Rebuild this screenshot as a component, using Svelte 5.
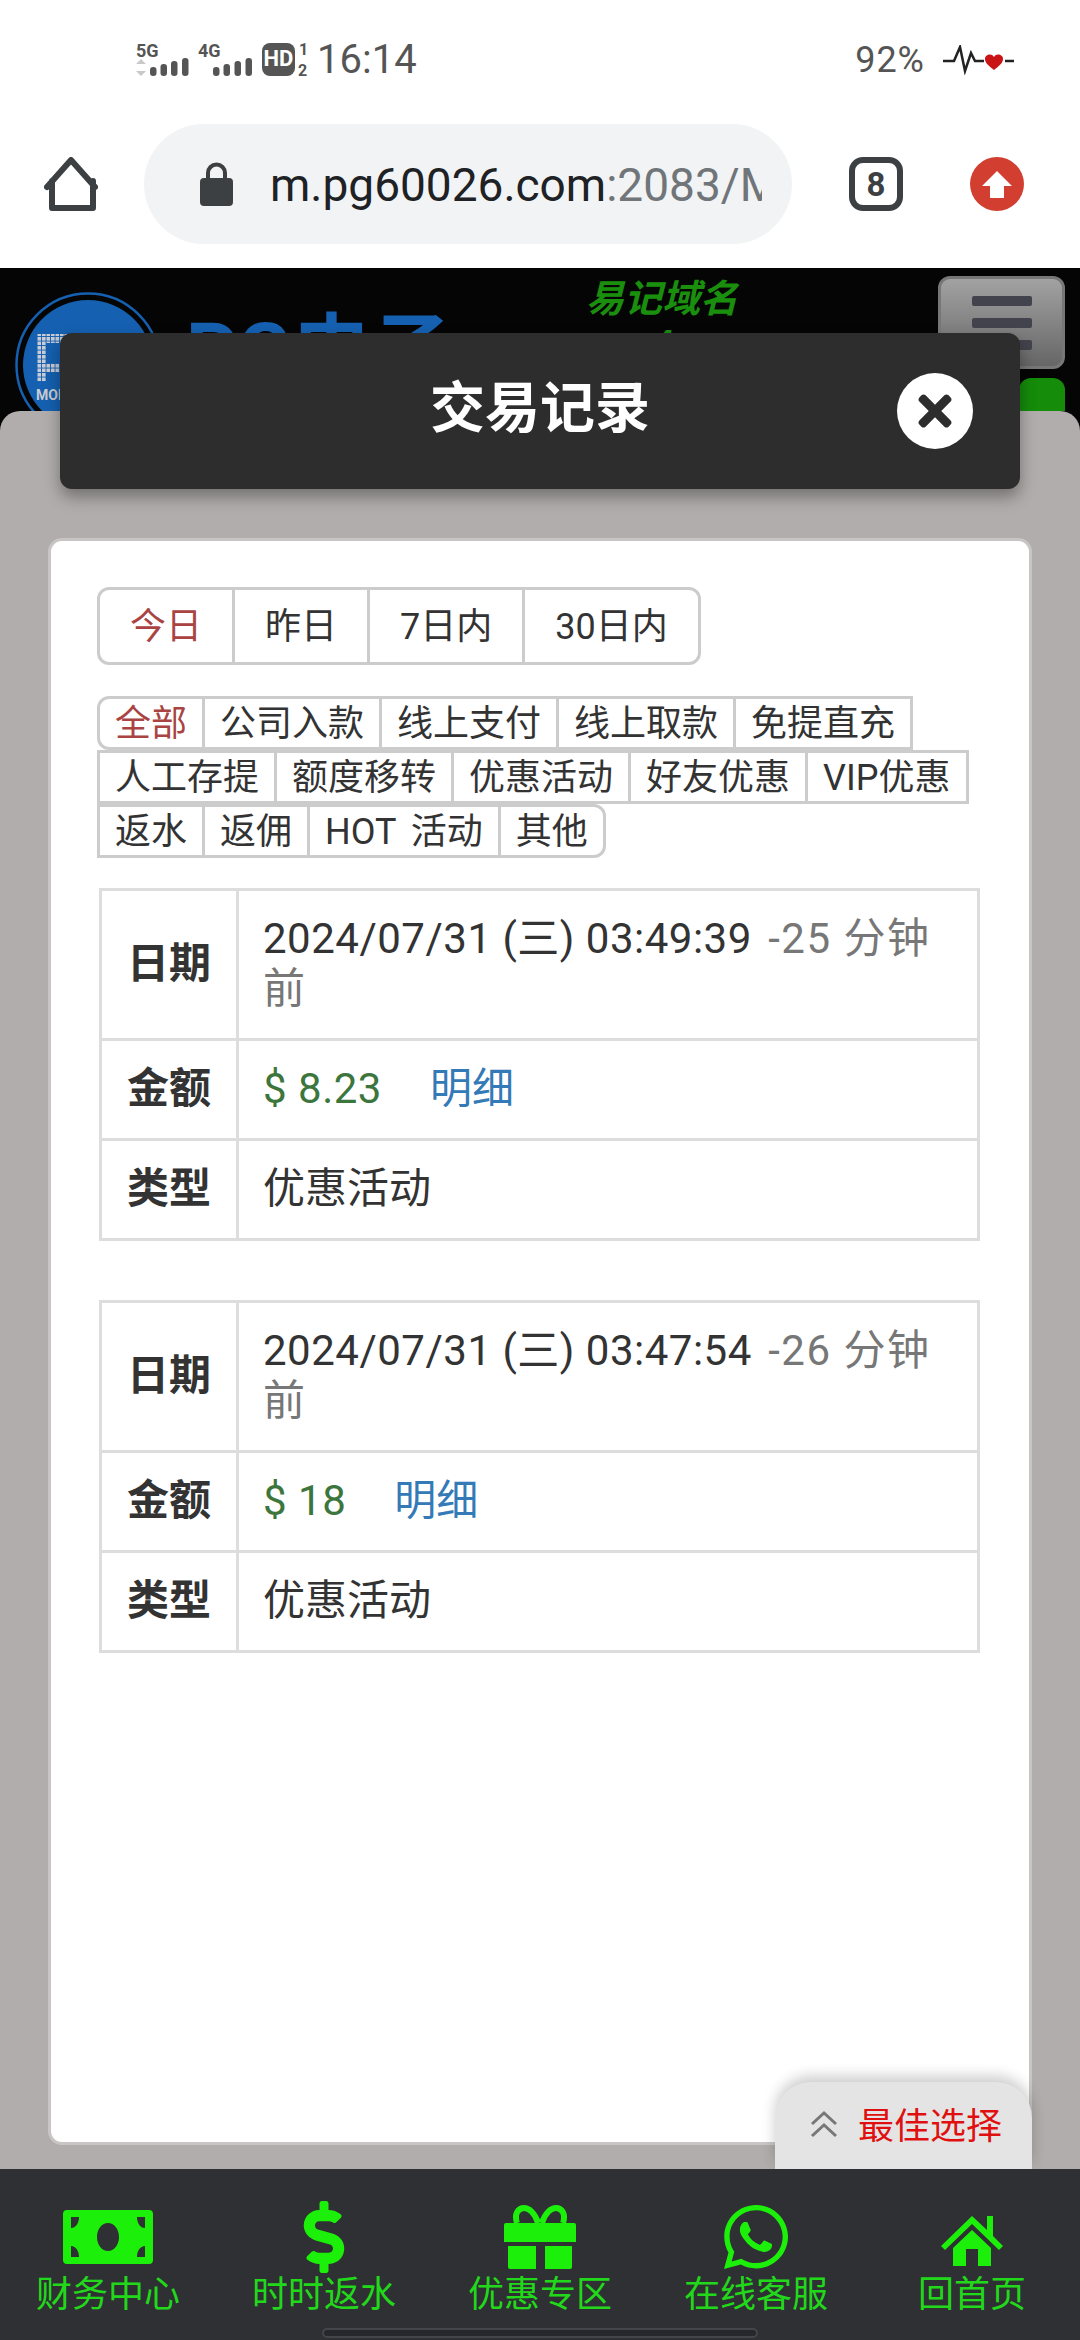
<script>
    const ranges = ['今日', '昨日', '7日内', '30日内'];
    const filters = ['全部', '公司入款', '线上支付', '线上取款', '免提直充', '人工存提', '额度移转', '优惠活动', '好友优惠', 'VIP优惠', '返水', '返佣', 'HOT 活动', '其他'];

    const records = [
        { date: '2024/07/31 (三) 03:49:39', ago: '-25 分钟前', amount: '$ 8.23', type: '优惠活动' },
        { date: '2024/07/31 (三) 03:47:54', ago: '-26 分钟前', amount: '$ 18', type: '优惠活动' }
    ];

    const signal5g = [150, 160.5, 171, 182];
    const signal4g = [213, 223.5, 234.5, 245.5];
</script>

<div class="phone">
    <header class="status">
        <svg class="indicators" width="176" height="40" viewBox="136 40 176 40">
            <text x="136" y="57" class="net">5G</text>
            <path d="M141 59l5 5h-10zM141 76l-5-5h10z" fill="#c9c9c9"/>
            {#each signal5g as x, i}
                <rect {x} y={67 - i * 3} width="6.5" height={9 + i * 3} rx="3" fill="#555"/>
            {/each}
            <text x="198" y="57" class="net">4G</text>
            {#each signal4g as x, i}
                <rect {x} y={67 - i * 3} width="6.5" height={9 + i * 3} rx="3" fill="#555"/>
            {/each}
            <rect x="262" y="43" width="33" height="33" rx="8" fill="#555"/>
            <text x="278.500" y="66" class="hd">HD</text>
            <text x="299" y="55" class="sim">1</text>
            <text x="298" y="76" class="sim">2</text>
        </svg>
        <span class="clock">16:14</span>
        <span class="battery">92%</span>
        <svg class="pulse" width="72" height="30" viewBox="944 46 72 30">
            <path d="M944 62h11l6-14 5 24 6-18 4 8h9" fill="none" stroke="#222" stroke-width="2.500"/>
            <path d="M995 71c-5-4-9-7-9-11 0-5 7-6 9-2 2-4 9-3 9 2 0 4-4 7-9 11z" fill="#c81414"/>
            <path d="M1006 62h9" stroke="#222" stroke-width="2.500"/>
        </svg>
    </header>

    <div class="browser">
        <svg class="home" width="54" height="54" viewBox="44 156 54 54">
            <path d="M71 159L47 186M71 159L95 186M52 180v27h41v-27" fill="none" stroke="#3c4043" stroke-width="6" stroke-linecap="round" stroke-linejoin="round"/>
        </svg>
        <div class="url">
            <svg width="33" height="44" viewBox="0 0 33 44">
                <path d="M8 18v-7a8.500 8.500 0 0 1 17 0v7" fill="none" stroke="#3c4043" stroke-width="4"/>
                <rect x="0" y="16" width="33" height="28" rx="4" fill="#3c4043"/>
            </svg>
            <span class="url-text">m.pg60026.com<span class="port">:2083/Member</span></span>
        </div>
        <div class="tabs-count">8</div>
        <svg class="update" width="54" height="54" viewBox="0 0 54 54">
            <circle cx="27" cy="27" r="27" fill="#d23f31"/>
            <path d="M27 14L42 29H34V41H20V29H12z" fill="#fff"/>
        </svg>
    </div>

    <main class="viewport">
        <div class="site-header">
            <svg class="logo" width="146" height="146" viewBox="0 0 146 146">
                <defs>
                    <pattern id="pixels" width="4.500" height="4.500" patternUnits="userSpaceOnUse">
                        <rect width="3.600" height="3.600" fill="#c9ccd6"/>
                    </pattern>
                </defs>
                <circle cx="73" cy="73" r="71.500" fill="none" stroke="#1560b0" stroke-width="2.500"/>
                <circle cx="73" cy="73" r="65" fill="#1560b0"/>
                <path d="M22 42h36v9H31v20h22v9H31v10h-9z" fill="url(#pixels)"/>
                <text x="21" y="108" class="mo">MOBILE</text>
            </svg>
            <div class="brand">PG电子</div>
            <div class="domain">
                <span>易记域名</span>
                <span>4</span>
            </div>
            <div class="side">
                <div class="menu-btn"><i></i><i></i><i></i></div>
                <div class="green-btn"></div>
            </div>
        </div>

        <section class="panel">
            <div class="title-bar">
                <h1>交易记录</h1>
                <button class="close" aria-label="关闭">
                    <svg width="34" height="48" viewBox="0 0 352 512">
                        <path d="M242.72 256l100.07-100.07c12.28-12.28 12.28-32.19 0-44.48l-22.24-22.24c-12.28-12.28-32.19-12.28-44.48 0L176 189.28 75.93 89.21c-12.28-12.28-32.19-12.28-44.48 0L9.21 111.45c-12.28 12.28-12.28 32.19 0 44.48L109.28 256 9.21 356.07c-12.28 12.28-12.28 32.19 0 44.48l22.24 22.24c12.28 12.28 32.2 12.28 44.48 0L176 322.72l100.07 100.07c12.28 12.28 32.2 12.28 44.48 0l22.24-22.24c12.28-12.28 12.28-32.19 0-44.48L242.72 256z" fill="#2d2d2d"/>
                    </svg>
                </button>
            </div>

            <div class="card">
                <div class="ranges">
                    {#each ranges as r, i}
                        <span class="range" class:active={i === 0}>{r}</span>
                    {/each}
                </div>

                <div class="filters">
                    {#each filters as f, i}
                        <span class="filter" class:active={i === 0} class:first={i === 0} class:last={i === filters.length - 1}>{f}</span>
                    {/each}
                </div>

                {#each records as rec}
                    <table>
                        <tbody>
                            <tr>
                                <th>日期</th>
                                <td><span class="stamp">{rec.date}</span> <span class="ago">{rec.ago}</span></td>
                            </tr>
                            <tr>
                                <th>金额</th>
                                <td><span class="amount">{rec.amount}</span><a href="#detail" class="detail">明细</a></td>
                            </tr>
                            <tr>
                                <th>类型</th>
                                <td>{rec.type}</td>
                            </tr>
                        </tbody>
                    </table>
                {/each}
            </div>

            <div class="best">
                <svg width="28" height="28" viewBox="0 0 28 28">
                    <path d="M2 14L14 3l12 11M2 26L14 15l12 11" fill="none" stroke="#777" stroke-width="3"/>
                </svg>
                <span>最佳选择</span>
            </div>
        </section>
    </main>

    <nav class="bottom-nav">
        <div class="nav-item">
            <svg width="90" height="54" viewBox="0 0 90 54">
                <path fill-rule="evenodd" d="M4 0h82a4 4 0 0 1 4 4v46a4 4 0 0 1-4 4H4a4 4 0 0 1-4-4V4a4 4 0 0 1 4-4zM45 13c-6 0-11 6-11 14s5 14 11 14 11-6 11-14-5-14-11-14zM8 7v11c5 0 8-5 8-11zM82 7h-8c0 6 3 11 8 11zM8 47h8c0-6-3-11-8-11zM82 47V36c-5 0-8 5-8 11z" fill="#1cf00a"/>
            </svg>
            <span>财务中心</span>
        </div>
        <div class="nav-item">
            <svg width="42" height="72" viewBox="0 0 288 512">
                <path d="M209.2 233.4l-108-31.6C88.7 198.2 80 186.5 80 173.5c0-16.3 13.2-29.5 29.5-29.5h66.3c12.2 0 24.2 3.7 34.2 10.5 6.1 4.1 14.3 3.1 19.5-2l34.8-34c7.1-6.9 6.1-18.4-1.8-24.5C238 74.8 207.4 64.1 176 64V16c0-8.8-7.2-16-16-16h-32c-8.8 0-16 7.2-16 16v48h-2.5C45.8 64-5.4 118.7.5 183.6c4.2 46.1 39.4 83.6 83.8 96.6l102.5 30c12.5 3.7 21.2 15.3 21.2 28.3 0 16.3-13.2 29.5-29.5 29.5h-66.3C100 368 88 364.3 78 357.5c-6.1-4.1-14.3-3.1-19.5 2l-34.8 34c-7.1 6.9-6.1 18.4 1.8 24.5 24.5 19.2 55.1 29.9 86.5 30v48c0 8.800 7.2 16 16 16h32c8.800 0 16-7.2 16-16v-48.2c46.6-.9 90.3-28.6 105.7-72.7 21.5-61.6-14.6-124.800-72.5-141.7z" fill="#1cf00a"/>
            </svg>
            <span>时时返水</span>
        </div>
        <div class="nav-item">
            <svg width="72" height="64" viewBox="0 0 72 64">
                <path d="M34 18C31 8 25 3 20 3 14 3 10 9 13 18M38 18C41 8 47 3 52 3 58 3 62 9 59 18" fill="none" stroke="#1cf00a" stroke-width="6"/>
                <path d="M2 18h68a2 2 0 0 1 2 2v17H0V20a2 2 0 0 1 2-2zM4 41h28v23H6a2 2 0 0 1-2-2zM41 41h27v21a2 2 0 0 1-2 2H41z" fill="#1cf00a"/>
            </svg>
            <span>优惠专区</span>
        </div>
        <div class="nav-item">
            <svg width="64" height="64" viewBox="0 32 448 448" preserveAspectRatio="none">
                <path d="M380.9 97.1C339 55.1 283.2 32 223.9 32c-122.4 0-222 99.6-222 222 0 39.1 10.2 77.3 29.6 111L0 480l117.7-30.9c32.4 17.7 68.9 27 106.1 27h.1c122.3 0 224.1-99.6 224.1-222 0-59.3-25.2-115-67.1-157zm-157 341.6c-33.2 0-65.7-8.9-94-25.7l-6.7-4-69.8 18.3L72 359.2l-4.4-7c-18.5-29.4-28.2-63.3-28.2-98.2 0-101.7 82.8-184.5 184.6-184.5 49.3 0 95.6 19.2 130.4 54.1 34.8 34.9 56.2 81.2 56.1 130.5 0 101.8-84.9 184.6-186.6 184.6zm101.2-138.2c-5.5-2.8-32.8-16.2-37.9-18-5.1-1.9-8.8-2.8-12.5 2.8-3.7 5.6-14.3 18-17.6 21.8-3.2 3.7-6.5 4.2-12 1.4-32.6-16.3-54-29.1-75.5-66-5.7-9.8 5.7-9.1 16.3-30.3 1.8-3.7.9-6.9-.5-9.7-1.4-2.8-12.5-30.1-17.1-41.2-4.5-10.8-9.1-9.3-12.5-9.5-3.2-.2-6.9-.2-10.6-.2-3.7 0-9.7 1.4-14.8 6.9-5.1 5.6-19.4 19-19.4 46.3 0 27.3 19.9 53.7 22.6 57.4 2.8 3.7 39.1 59.7 94.8 83.8 35.2 15.2 49 16.5 66.6 13.9 10.7-1.6 32.8-13.4 37.4-26.4 4.6-13 4.6-24.1 3.2-26.4-1.3-2.5-5-3.9-10.5-6.6z" fill="#1cf00a"/>
            </svg>
            <span>在线客服</span>
        </div>
        <div class="nav-item">
            <svg class="nav-home" width="62" height="50" viewBox="0 0 62 50">
                <path d="M31 0L46 14V0h6v20l10 10-4 4L31 8 4 34l-4-4z" fill="#1cf00a"/>
                <path d="M31 14l19 18v18H37V33H25v17H12V32z" fill="#1cf00a"/>
            </svg>
            <span>回首页</span>
        </div>
        <div class="home-bar"></div>
    </nav>
</div>

<style>
    :global(body) {
        margin: 0;
        background: #fff;
    }

    .phone {
        display: flex;
        flex-direction: column;
        width: 1080px;
        height: 2340px;
        overflow: hidden;
        font-family: Roboto, "Noto Sans CJK SC", sans-serif;
        color: #333;
    }

    /* status bar */
    .status {
        display: flex;
        align-items: center;
        height: 100px;
        padding: 20px 65px 0 136px;
        box-sizing: border-box;
        background: #fff;
        color: #555;
    }

    .indicators {
        flex: none;
    }

    .net {
        font: 700 18px Roboto, sans-serif;
        fill: #555;
    }

    .hd {
        font: 700 22px Roboto, sans-serif;
        fill: #fff;
        text-anchor: middle;
    }

    .sim {
        font: 700 16px Roboto, sans-serif;
        fill: #555;
    }

    .clock {
        margin-left: 5px;
        font-size: 40px;
        line-height: 40px;
    }

    .battery {
        margin-left: auto;
        font-size: 36px;
        line-height: 40px;
        letter-spacing: 1px;
    }

    .pulse {
        flex: none;
        margin-left: 18px;
    }

    /* browser bar */
    .browser {
        display: flex;
        align-items: center;
        height: 168px;
        flex: none;
        background: #fff;
    }

    .home {
        flex: none;
        margin-left: 44px;
    }

    .url {
        display: flex;
        align-items: center;
        flex: none;
        width: 648px;
        height: 120px;
        margin-left: 46px;
        padding-left: 56px;
        box-sizing: border-box;
        border-radius: 60px;
        background: #f1f3f4;
    }

    .url svg {
        flex: none;
    }

    .url-text {
        display: block;
        width: 492px;
        margin: 2px 0 0 37px;
        overflow: hidden;
        white-space: nowrap;
        font-size: 46px;
        color: #202124;
    }

    .port {
        color: #70757a;
    }

    .tabs-count {
        display: flex;
        align-items: center;
        justify-content: center;
        flex: none;
        width: 54px;
        height: 54px;
        margin-left: 57px;
        box-sizing: border-box;
        border: 6px solid #3c4043;
        border-radius: 14px;
        font-size: 33px;
        font-weight: 700;
        color: #3c4043;
    }

    .update {
        flex: none;
        margin-left: 67px;
    }

    /* page behind the dialog */
    .viewport {
        position: relative;
        flex: 1;
        min-height: 0;
        background: #050505;
    }

    .site-header {
        display: flex;
        align-items: flex-start;
        height: 143px;
        overflow: hidden;
    }

    .logo {
        flex: none;
        margin: 24px 0 0 15px;
    }

    .mo {
        font: 700 14px Roboto, sans-serif;
        fill: #c9ccd2;
    }

    .brand {
        flex: none;
        width: 398px;
        margin: 39px 0 0 25px;
        font-size: 80px;
        font-weight: 700;
        line-height: 90px;
        white-space: nowrap;
        color: #1560b0;
    }

    .domain {
        display: flex;
        flex-direction: column;
        align-items: center;
        flex: none;
        width: 156px;
        margin-top: 8px;
        font-size: 38px;
        font-weight: 700;
        font-style: italic;
        line-height: 46px;
        color: #1a8f0e;
    }

    .side {
        display: flex;
        flex-direction: column;
        flex: none;
        width: 127px;
        margin: 8px 0 0 198px;
    }

    .menu-btn {
        display: flex;
        flex-direction: column;
        align-items: center;
        gap: 12px;
        height: 93px;
        padding-top: 17px;
        box-sizing: border-box;
        border: 3px solid #777;
        border-radius: 12px;
        background: linear-gradient(#a2a2a2, #666);
    }

    .menu-btn i {
        display: block;
        width: 60px;
        height: 10px;
        border-radius: 2px;
        background: #43434d;
    }

    .green-btn {
        align-self: flex-end;
        width: 46px;
        height: 50px;
        margin-top: 9px;
        border-radius: 12px 12px 0 0;
        background: #158c0a;
    }

    /* dialog */
    .panel {
        position: absolute;
        inset: 143px 0 0 0;
        display: flex;
        flex-direction: column;
        border-radius: 20px 20px 0 0;
        background: #b2adad;
    }

    .title-bar {
        position: relative;
        display: flex;
        align-items: center;
        justify-content: center;
        flex: none;
        height: 156px;
        margin: -78px 60px 0;
        border-radius: 12px;
        background: #2d2d2d;
        box-shadow: 0 8px 16px rgba(0, 0, 0, 0.35);
    }

    .title-bar h1 {
        margin: 0 0 16px;
        font-size: 55px;
        font-weight: 700;
        color: #fff;
    }

    .close {
        position: absolute;
        top: 40px;
        right: 47px;
        display: flex;
        align-items: center;
        justify-content: center;
        width: 76px;
        height: 76px;
        padding: 0;
        border: none;
        border-radius: 50%;
        background: #fff;
    }

    .card {
        flex: 1;
        min-height: 0;
        margin: 49px 48px 24px;
        padding: 46px 46px 0;
        box-sizing: border-box;
        border: 3px solid #c9c5c5;
        border-radius: 14px;
        background: #fff;
    }

    .ranges {
        display: inline-flex;
        height: 78px;
        box-sizing: border-box;
        border: 3px solid #ccc;
        border-radius: 12px;
        vertical-align: top;
    }

    .range {
        padding: 0 30px;
        font-size: 36px;
        line-height: 74px;
        border-left: 3px solid #ccc;
    }

    .range:first-child {
        border-left: none;
    }

    .range.active,
    .filter.active {
        color: #a94442;
    }

    .filters {
        display: flex;
        flex-wrap: wrap;
        margin-top: 31px;
        padding-right: 3px;
    }

    .filter {
        height: 54px;
        margin: 0 -3px 0 0;
        padding: 0 15px;
        box-sizing: border-box;
        border: 3px solid #ccc;
        font-size: 36px;
        line-height: 50px;
        word-spacing: 6px;
        white-space: nowrap;
    }

    .filter.first {
        border-radius: 12px 0 0 12px;
    }

    .filter.last {
        border-radius: 0 12px 12px 0;
    }

    table {
        width: 881px;
        margin: 30px 0 59px 2px;
        border-collapse: collapse;
        table-layout: fixed;
        font-size: 42px;
        line-height: 50px;
    }

    th,
    td {
        padding: 23px 25px 24px 24px;
        border: 3px solid #ddd;
    }

    th {
        width: 134px;
        padding-left: 0;
        padding-right: 0;
        font-weight: 700;
        white-space: nowrap;
    }

    td {
        text-align: left;
    }

    .stamp {
        letter-spacing: 0.5px;
    }

    .ago {
        margin-left: 6px;
        letter-spacing: 1.5px;
        color: #777;
    }

    .amount {
        letter-spacing: 0.5px;
        color: #3c763d;
    }

    .detail {
        margin-left: 48px;
        color: #337ab7;
        text-decoration: none;
    }

    table + table {
        margin-top: 0;
    }

    .best {
        position: absolute;
        right: 48px;
        bottom: 0;
        display: flex;
        align-items: flex-start;
        gap: 20px;
        width: 257px;
        height: 87px;
        padding: 24px 0 0 35px;
        box-sizing: border-box;
        border-radius: 36px 36px 0 0;
        background: #e4e4e4;
        box-shadow: 0 -6px 14px rgba(0, 0, 0, 0.2);
        font-size: 36px;
        line-height: 42px;
        color: #e01010;
    }

    .best svg {
        flex: none;
        margin-top: 4px;
    }

    /* bottom nav */
    .bottom-nav {
        position: relative;
        display: grid;
        grid-template-columns: repeat(5, 1fr);
        flex: none;
        height: 171px;
        background: #2f3033;
    }

    .nav-item {
        display: grid;
        grid-template-rows: 72px 44px;
        justify-items: center;
        align-items: center;
        height: 148px;
        padding-top: 32px;
        box-sizing: border-box;
        font-size: 36px;
        line-height: 44px;
        color: #22d81a;
    }

    .nav-home {
        margin-top: 8px;
    }

    .home-bar {
        position: absolute;
        left: 322px;
        bottom: 2px;
        width: 436px;
        height: 10px;
        box-sizing: border-box;
        border: 2px solid #44454a;
        border-radius: 5px;
        background: #26272a;
    }
</style>
